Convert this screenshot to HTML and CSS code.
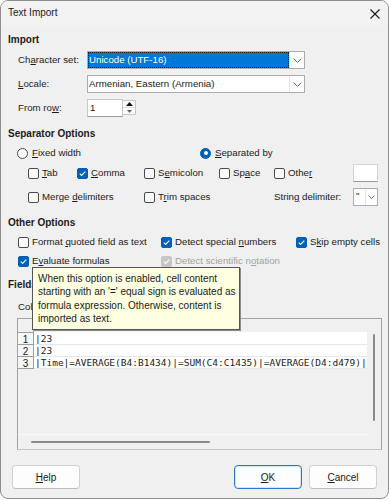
FILE: index.html
```html
<!DOCTYPE html>
<html>
<head>
<meta charset="utf-8">
<title>Text Import</title>
<link rel="stylesheet" href="styles.css">
</head>
<body>
<div class="window">
  <div class="titlebar">
    <span class="title">Text Import</span>
    <svg class="close" width="10" height="10" viewBox="0 0 10 10"><path d="M0.5 0.5L9.5 9.5M9.5 0.5L0.5 9.5" stroke="#1a1a1a" stroke-width="1.1" fill="none"/></svg>
  </div>
  <div class="content">
    <div class="heading">Import</div>
    <div class="form">
      <div class="frow">
        <span class="flabel">Ch<u>a</u>racter set:</span>
        <div class="combo wide">
          <span class="combo-value selected">Unicode (UTF-16)</span>
          <span class="combo-btn"><svg width="9" height="5" viewBox="0 0 9 5"><path d="M0.5 0.5L4.5 4.5L8.5 0.5" stroke="#6d6d6d" fill="none"/></svg></span>
        </div>
      </div>
      <div class="frow">
        <span class="flabel"><u>L</u>ocale:</span>
        <div class="combo wide">
          <span class="combo-value">Armenian, Eastern (Armenia)</span>
          <span class="combo-btn"><svg width="9" height="5" viewBox="0 0 9 5"><path d="M0.5 0.5L4.5 4.5L8.5 0.5" stroke="#6d6d6d" fill="none"/></svg></span>
        </div>
      </div>
      <div class="frow">
        <span class="flabel">From ro<u>w</u>:</span>
        <div class="spin">
          <span class="spin-value">1</span>
          <span class="spin-btns">
            <span class="spin-half"><svg width="7" height="4" viewBox="0 0 7 4"><path d="M0 4L3.5 0L7 4Z" fill="#111"/></svg></span>
            <span class="spin-half lower"><svg width="5" height="3" viewBox="0 0 5 3"><path d="M0 0L2.5 3L5 0Z" fill="#666"/></svg></span>
          </span>
        </div>
      </div>
    </div>

    <div class="heading sec">Separator Options</div>
    <div class="radio-row">
      <span class="opt"><span class="radio"></span><span><u>F</u>ixed width</span></span>
      <span class="opt"><span class="radio on"></span><span><u>S</u>eparated by</span></span>
    </div>
    <div class="sep-grid">
      <span class="opt"><span class="cb"></span><span><u>T</u>ab</span></span>
      <span class="opt"><span class="cb on"><svg width="9" height="9" viewBox="0 0 9 9"><path d="M1.8 4.7L3.6 6.4L7.3 2.6" stroke="#fff" stroke-width="1.1" fill="none"/></svg></span><span><u>C</u>omma</span></span>
      <span class="opt"><span class="cb"></span><span>S<u>e</u>micolon</span></span>
      <span class="opt"><span class="cb"></span><span>Sp<u>a</u>ce</span></span>
      <span class="opt"><span class="cb"></span><span>Othe<u>r</u></span></span>
      <span class="textbox"></span>
      <span class="opt span2"><span class="cb"></span><span>Merge <u>d</u>elimiters</span></span>
      <span class="opt span2"><span class="cb"></span><span>T<u>r</u>im spaces</span></span>
      <span class="opt"><span>Strin<u>g</u> delimiter:</span></span>
      <div class="combo mini">
        <span class="combo-value">"</span>
        <span class="combo-btn"><svg width="7" height="4" viewBox="0 0 7 4"><path d="M0.5 0.5L3.5 3.5L6.5 0.5" stroke="#6d6d6d" fill="none"/></svg></span>
      </div>
    </div>

    <div class="heading sec">Other Options</div>
    <div class="other-grid">
      <span class="opt"><span class="cb"></span><span>Format <u>q</u>uoted field as text</span></span>
      <span class="opt"><span class="cb on"><svg width="9" height="9" viewBox="0 0 9 9"><path d="M1.8 4.7L3.6 6.4L7.3 2.6" stroke="#fff" stroke-width="1.1" fill="none"/></svg></span><span>Detect special <u>n</u>umbers</span></span>
      <span class="opt"><span class="cb on"><svg width="9" height="9" viewBox="0 0 9 9"><path d="M1.8 4.7L3.6 6.4L7.3 2.6" stroke="#fff" stroke-width="1.1" fill="none"/></svg></span><span>S<u>k</u>ip empty cells</span></span>
      <span class="opt"><span class="cb on"><svg width="9" height="9" viewBox="0 0 9 9"><path d="M1.8 4.7L3.6 6.4L7.3 2.6" stroke="#fff" stroke-width="1.1" fill="none"/></svg></span><span>E<u>v</u>aluate formulas</span></span>
      <span class="opt disabled"><span class="cb on off"><svg width="9" height="9" viewBox="0 0 9 9"><path d="M1.8 4.7L3.6 6.4L7.3 2.6" stroke="#fff" stroke-width="1.1" fill="none"/></svg></span><span>Detect scientific n<u>o</u>tation</span></span>
    </div>

    <div class="heading sec">Fields</div>
    <div class="coltype">Column t<u>y</u>pe:</div>
    <div class="preview">
      <div class="preview-main">
        <div class="prow header"><span class="rnum"></span><span class="rtext"></span></div>
        <div class="prow"><span class="rnum">1</span><span class="rtext">|23</span></div>
        <div class="prow"><span class="rnum">2</span><span class="rtext">|23</span></div>
        <div class="prow"><span class="rnum">3</span><span class="rtext">|Time|=AVERAGE(B4:B1434)|=SUM(C4:C1435)|=AVERAGE(D4:d479)|</span></div>
        <div class="pfill"></div>
        <div class="hscroll"><span class="hthumb"></span></div>
      </div>
      <div class="vscroll"><span class="vthumb"></span></div>
    </div>
  </div>

  <div class="buttons">
    <button class="btn"><u>H</u>elp</button>
    <div class="btn-group">
      <button class="btn default"><u>O</u>K</button>
      <button class="btn"><u>C</u>ancel</button>
    </div>
  </div>

  <div class="tooltip">When this option is enabled, cell content<br>starting with an '=' equal sign is evaluated as<br>formula expression. Otherwise, content is<br>imported as text.</div>
</div>
</body>
</html>
```

FILE: styles.css
```css
* { box-sizing: border-box; }
html, body { margin: 0; padding: 0; }
body {
  width: 389px;
  height: 500px;
  overflow: hidden;
  background: #ffffff;
  font-family: "Liberation Sans", Arial, sans-serif;
  font-size: 9.7px;
  color: #1b1b1b;
}
u { text-decoration: underline; text-underline-offset: 1px; }

.window {
  position: relative;
  width: 389px;
  height: 499px;
  border: 1px solid #8e8e8e;
  border-radius: 8px;
  background: #f0f0f0;
  overflow: hidden;
  display: flex;
  flex-direction: column;
}

.titlebar {
  height: 24px;
  flex: none;
  background: #f3f3f3;
  display: flex;
  align-items: center;
  justify-content: space-between;
  padding: 0 8px 0 7px;
}
.title { font-size: 10px; line-height: 14px; }
.close { display: block; margin-top: 1px; }

.content {
  padding: 8px 0 0 7px;
  display: flex;
  flex-direction: column;
}
.heading {
  font-weight: bold;
  font-size: 10px;
  line-height: 14px;
  height: 14px;
}
.heading.sec { margin-top: 10px; }

.form {
  margin-top: 4px;
  padding-left: 10px;
  display: flex;
  flex-direction: column;
  gap: 6px;
}
.frow {
  display: flex;
  align-items: center;
  height: 18px;
}
.flabel { width: 69px; line-height: 14px; }

.combo {
  display: flex;
  height: 18px;
  border: 1px solid #acacac;
  background: #ffffff;
}
.combo.wide { width: 218px; }
.combo-value {
  flex: 1;
  line-height: 16px;
  padding-left: 1px;
  white-space: nowrap;
}
.combo-value.selected {
  background: #0078d7;
  color: #ffffff;
  outline: 1px dotted #1a1a1a;
  outline-offset: -1px;
}
.combo-btn {
  width: 15px;
  border-left: 1px solid #e3e3e3;
  display: flex;
  align-items: center;
  justify-content: center;
}
.combo.mini { width: 25px; }
.combo.mini .combo-value { padding-left: 2px; line-height: 14px; }
.combo.mini .combo-btn { width: 12px; }

.spin {
  display: flex;
  height: 18px;
}
.spin-value {
  width: 36px;
  border: 1px solid #c8c8c8;
  border-bottom-color: #9a9a9a;
  background: #ffffff;
  line-height: 16px;
  padding-left: 2px;
}
.spin-btns {
  width: 13px;
  height: 15px;
  margin-top: 1px;
  border: 1px solid #c8c8c8;
  border-left: none;
  background: #fbfbfb;
  display: flex;
  flex-direction: column;
}
.spin-half {
  flex: 1;
  display: flex;
  align-items: center;
  justify-content: center;
}
.spin-half.lower { border-top: 1px solid #e0e0e0; }

.opt {
  display: flex;
  align-items: center;
  gap: 3px;
  white-space: nowrap;
  line-height: 14px;
}
.cb {
  width: 11px;
  height: 11px;
  flex: none;
  border: 1px solid #4a4a4a;
  border-radius: 2px;
  background: #fbfbfb;
  display: flex;
  align-items: center;
  justify-content: center;
}
.cb.on { background: #005fb8; border-color: #005fb8; }
.cb.on.off { background: #c6c6c6; border-color: #c6c6c6; }
.disabled { color: #a2a2a2; }

.radio {
  width: 11px;
  height: 11px;
  flex: none;
  border: 1px solid #4a4a4a;
  border-radius: 50%;
  background: #fbfbfb;
  display: flex;
  align-items: center;
  justify-content: center;
}
.radio.on { background: #005fb8; border-color: #005fb8; }
.radio.on::after {
  content: "";
  width: 4px;
  height: 4px;
  border-radius: 50%;
  background: #ffffff;
}

.radio-row {
  margin-top: 5px;
  height: 14px;
  padding-left: 9px;
  display: grid;
  grid-template-columns: 183px auto;
}
.radio-row .opt { gap: 4px; }

.sep-grid {
  margin-top: 4px;
  padding-left: 20px;
  display: grid;
  grid-template-columns: 49px 67px 75px 55px 79px 25px;
  grid-auto-rows: 18px;
  row-gap: 6px;
}
.span2 { grid-column: span 2; }
.textbox {
  width: 25px;
  height: 18px;
  background: #ffffff;
  border: 1px solid #d4d4d4;
  border-bottom-color: #9a9a9a;
}

.other-grid {
  margin-top: 5px;
  padding-left: 10px;
  display: grid;
  grid-template-columns: 143px 135px auto;
  grid-auto-rows: 14px;
  row-gap: 5px;
}

.coltype {
  margin-top: 8px;
  padding-left: 10px;
  line-height: 14px;
}

.preview {
  margin-top: 4px;
  margin-left: 9px;
  width: 365px;
  height: 132px;
  border: 1px solid #a3a3a3;
  border-bottom-color: #c4c4c4;
  display: flex;
}
.preview-main {
  width: 349px;
  display: flex;
  flex-direction: column;
}
.prow {
  height: 12px;
  display: flex;
}
.prow.header { height: 14px; }
.prow.header .rtext { background: #f0f0f0; border-bottom: 1px solid #ffffff; }
.prow.header .rnum { background: #f0f0f0; }
.rnum {
  width: 16px;
  flex: none;
  border-right: 1px solid #9c9c9c;
  border-bottom: 1px solid #9c9c9c;
  background: #f7f7f7;
  text-align: center;
  font-size: 10px;
  line-height: 12px;
  padding-top: 1px;
}
.rtext {
  flex: 1;
  background: #ffffff;
  border-bottom: 1px solid #e8e8e8;
  font-family: "DejaVu Sans Mono", "Liberation Mono", monospace;
  font-size: 9.5px;
  line-height: 11px;
  white-space: nowrap;
  overflow: hidden;
  padding-left: 1px;
}
.pfill {
  flex: 1;
  background: #f0f0f0;
  border-bottom: 1px solid #fafafa;
}
.hscroll {
  height: 14px;
  flex: none;
  padding: 6px 0 0 13px;
}
.hthumb {
  display: block;
  width: 179px;
  height: 2px;
  background: #8a8a8a;
  border-radius: 1px;
}
.vscroll {
  width: 14px;
  padding: 15px 0 0 6px;
}
.vthumb {
  display: block;
  width: 2px;
  height: 87px;
  background: #8a8a8a;
  border-radius: 1px;
}

.buttons {
  margin-top: 15px;
  padding: 0 11px 0 11px;
  display: flex;
  justify-content: space-between;
}
.btn-group { display: flex; gap: 7px; }
.btn {
  width: 68px;
  height: 24px;
  border: 1px solid #d0d0d0;
  border-bottom-color: #bdbdbd;
  border-radius: 4px;
  background: #fdfdfd;
  font-family: "Liberation Sans", Arial, sans-serif;
  font-size: 10px;
  color: #1b1b1b;
  padding: 0;
}
.btn.default {
  border: 1px solid #2a78c8;
  box-shadow: inset 0 0 0 1px #d6e6f6;
}

.tooltip {
  position: absolute;
  left: 31px;
  top: 266px;
  width: 208px;
  height: 63px;
  background: #ffffe1;
  border: 1px solid #575757;
  box-shadow: 1px 1px 0 #8c8c8c;
  padding: 4px 0 0 5px;
  line-height: 13.3px;
  font-size: 10px;
  color: #1b1b1b;
  white-space: nowrap;
}
```
